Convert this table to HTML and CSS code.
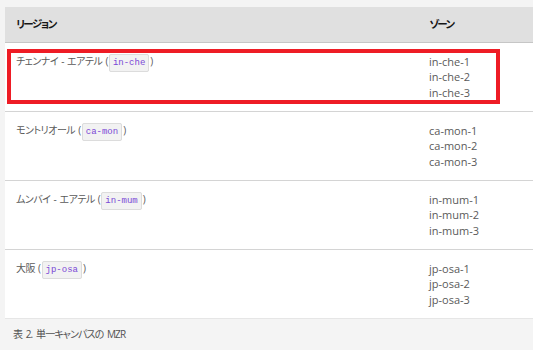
FILE: index.html
```html
<!DOCTYPE html>
<html lang="ja">
<head>
<meta charset="utf-8">
<link rel="stylesheet" href="styles.css">
</head>
<body>
<div class="wrap">
  <table class="tbl">
    <thead>
      <tr><th class="c1">リージョン</th><th>ゾーン</th></tr>
    </thead>
    <tbody>
      <tr><td class="c1">チェンナイ - エアテル (<code>in-che</code>)</td><td>in-che-1<br>in-che-2<br>in-che-3</td></tr>
      <tr><td class="c1">モントリオール (<code>ca-mon</code>)</td><td>ca-mon-1<br>ca-mon-2<br>ca-mon-3</td></tr>
      <tr><td class="c1">ムンバイ - エアテル (<code>in-mum</code>)</td><td>in-mum-1<br>in-mum-2<br>in-mum-3</td></tr>
      <tr><td class="c1">大阪 (<code>jp-osa</code>)</td><td>jp-osa-1<br>jp-osa-2<br>jp-osa-3</td></tr>
    </tbody>
  </table>
  <p class="caption">表 2. 単一キャンパスの MZR</p>
  <div class="highlight"></div>
</div>
</body>
</html>
```

FILE: styles.css
```css
html, body {
  margin: 0;
  padding: 0;
  background: #f4f4f4;
  overflow: hidden;
}
body {
  font-family: "Open Sans", "Noto Sans CJK JP", sans-serif;
  font-feature-settings: "palt";
  color: #5a5a5a;
  font-size: 11px;
}
.wrap {
  position: relative;
  padding: 7px 0 0 5px;
}
.tbl {
  width: 540px;
  border-collapse: collapse;
  background: #fff;
}
.tbl th {
  height: 35px;
  box-sizing: border-box;
  background: #e0e0e0;
  color: #161616;
  font-weight: 700;
  font-size: 10.5px;
  letter-spacing: -1.5px;
  text-align: left;
  padding: 0 11px;
  border-bottom: 1px solid #c6c6c6;
  line-height: 16px;
}
.tbl td {
  padding: 11px 11px 10px;
  vertical-align: top;
  line-height: 15.5px;
  border-bottom: 1px solid #d4d4d4;
  height: 47px;
}
.tbl td.c1 {
  font-size: 10px;
  letter-spacing: -0.5px;
  word-spacing: 1px;
}
.tbl tbody tr:last-child td {
  border-bottom: 1px solid #e6e6e6;
}
.c1 {
  width: 391px;
}
code {
  font-family: "Liberation Mono", monospace;
  font-size: 9px;
  letter-spacing: 0;
  word-spacing: 0;
  color: #7a48d6;
  background: #f2f2f2;
  border: 1px solid #dcdcdc;
  border-radius: 2px;
  padding: 3px 3px;
  margin: 0 1px;
}
.caption {
  margin: 8px 0 0 8px;
  font-size: 10px;
  letter-spacing: -0.9px;
  word-spacing: 2px;
  line-height: 14px;
  color: #525252;
}
.highlight {
  position: absolute;
  left: 7px;
  top: 49px;
  width: 493px;
  height: 55px;
  box-sizing: border-box;
  border: 4px solid #ee1c25;
}
```
